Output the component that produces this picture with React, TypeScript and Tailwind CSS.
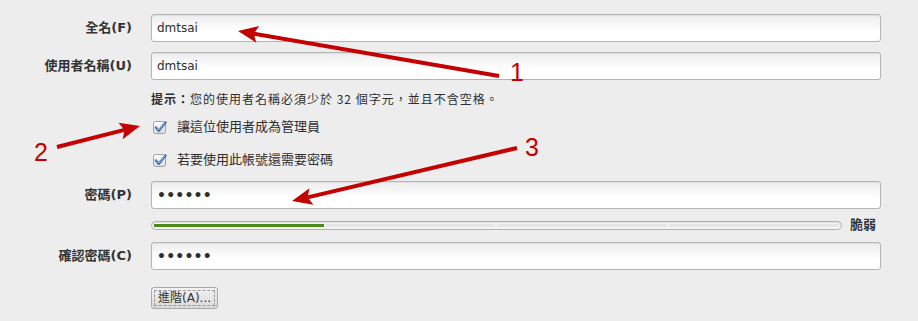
import React from "react";

const fieldClass =
  "h-[28px] w-full rounded-[3px] border border-[#b4b4b4] bg-linear-to-b from-[#ededed] to-white to-60% px-[5px] text-[12px] text-[#2e2e2e] shadow-[inset_0_1px_1px_rgba(0,0,0,0.06)] outline-none";

const Row = ({ label, children }: { label?: string; children: React.ReactNode }) => (
  <div className="grid grid-cols-[132px_1fr] items-center gap-x-[19px]">
    <div className="text-right text-[13px] font-bold text-[#333]">{label}</div>
    <div>{children}</div>
  </div>
);

const Check = ({ text }: { text: string }) => (
  <div className="flex items-center gap-[10px] pl-[2px]">
    <svg width="14" height="14" viewBox="0 0 14 14">
      <defs>
        <linearGradient id="cb" x1="0" y1="0" x2="0" y2="1">
          <stop offset="0" stopColor="#ffffff" />
          <stop offset="1" stopColor="#dcdcdc" />
        </linearGradient>
      </defs>
      <rect x="0.5" y="1.5" width="12" height="12" rx="2" fill="url(#cb)" stroke="#a0a0a0" />
      <path d="M3 7.5 L5.8 10.8 L12.5 2.5" fill="none" stroke="#3b6cb4" strokeWidth="2.4" strokeLinecap="round" strokeLinejoin="round" />
      <path d="M3.6 7.6 L5.8 10 L12 2.8" fill="none" stroke="#a9c4ec" strokeWidth="0.8" strokeLinecap="round" />
    </svg>
    <span className="text-[13px] text-[#2e2e2e]">{text}</span>
  </div>
);

type Pt = [number, number];

const arrow = (tail: Pt, tip: Pt, len = 20, half = 8.5) => {
  const dx = tip[0] - tail[0];
  const dy = tip[1] - tail[1];
  const d = Math.hypot(dx, dy);
  const ux = dx / d;
  const uy = dy / d;
  const nx = -uy;
  const ny = ux;
  const bx = tip[0] - ux * len;
  const by = tip[1] - uy * len;
  const notchX = tip[0] - ux * (len - 4);
  const notchY = tip[1] - uy * (len - 4);
  const head = `${tip[0]},${tip[1]} ${bx + nx * half},${by + ny * half} ${notchX},${notchY} ${bx - nx * half},${by - ny * half}`;
  return { line: { x1: tail[0], y1: tail[1], x2: notchX, y2: notchY }, head };
};

const Annotations = () => {
  const arrows = [
    arrow([499, 76], [238, 31]),
    arrow([57, 147], [140, 126]),
    arrow([517, 148], [292, 201]),
  ];
  return (
    <svg className="pointer-events-none absolute inset-0" width="918" height="321" viewBox="0 0 918 321">
      {arrows.map((a, i) => (
        <g key={i}>
          <line {...a.line} stroke="#c40000" strokeWidth="4" />
          <polygon points={a.head} fill="#c40000" />
        </g>
      ))}
      <g fill="#c40000" fontFamily="Liberation Sans, Arial, sans-serif" fontSize="25">
        <text x="510" y="81">1</text>
        <text x="34" y="161">2</text>
        <text x="525" y="156">3</text>
      </g>
    </svg>
  );
};

export default function App() {
  return (
    <div className="relative h-[321px] w-[918px] overflow-hidden bg-[#ededed] pt-[14px] pr-[37px] font-['DejaVu_Sans','Noto_Sans_CJK_TC',sans-serif]">
      <div className="flex flex-col">
        <Row label="全名(F)">
          <input className={fieldClass} defaultValue="dmtsai" readOnly />
        </Row>
        <div className="mt-[10px]">
          <Row label="使用者名稱(U)">
            <input className={fieldClass} defaultValue="dmtsai" readOnly />
          </Row>
        </div>
        <div className="mt-[11px]">
          <Row>
            <p className="font-['Noto_Sans_CJK_TC',sans-serif] text-[12px] leading-[16px] tracking-[1px] text-[#2e2e2e]">
              <span className="font-bold">提示：</span>您的使用者名稱必須少於 32 個字元，並且不含空格。
            </p>
          </Row>
        </div>
        <div className="mt-[10px] h-[18px]">
          <Row>
            <Check text="讓這位使用者成為管理員" />
          </Row>
        </div>
        <div className="mt-[15px] h-[18px]">
          <Row>
            <Check text="若要使用此帳號還需要密碼" />
          </Row>
        </div>
        <div className="mt-[13px]">
          <Row label="密碼(P)">
            <div className={`${fieldClass} flex items-center text-[14px] font-bold tracking-[0.2px]`}>••••••</div>
          </Row>
        </div>
        <div className="mt-[8px]">
          <Row>
            <div className="flex h-[16px] items-center">
              <div className="flex h-[9px] flex-1 items-center rounded-full border border-[#b0b0b0] bg-[#f4f4f4] px-[2px] shadow-[inset_0_1px_1px_rgba(0,0,0,0.08)]">
                <div className="grid h-[3px] flex-1 grid-cols-4 gap-[2px]">
                  <div className="bg-[#4b8a1c]" />
                  <div className="bg-[#e6e6e6]" />
                  <div className="bg-[#e6e6e6]" />
                  <div className="bg-[#e6e6e6]" />
                </div>
              </div>
              <span className="ml-[8px] mr-[5px] text-[13px] font-bold text-[#333]">脆弱</span>
            </div>
          </Row>
        </div>
        <div className="mt-[9px]">
          <Row label="確認密碼(C)">
            <div className={`${fieldClass} flex items-center text-[14px] font-bold tracking-[0.2px]`}>••••••</div>
          </Row>
        </div>
        <div className="mt-[15px]">
          <Row>
            <button className="h-[22px] rounded-[3px] border border-[#a8a8a8] bg-linear-to-b from-[#f2f2f2] to-[#d9d9d9] p-[2px]">
              <span className="flex h-full items-center border border-dashed border-[#9a9a9a] px-[3px] text-[12px] text-[#333]">
                進階(A)...
              </span>
            </button>
          </Row>
        </div>
      </div>
      <Annotations />
    </div>
  );
}
